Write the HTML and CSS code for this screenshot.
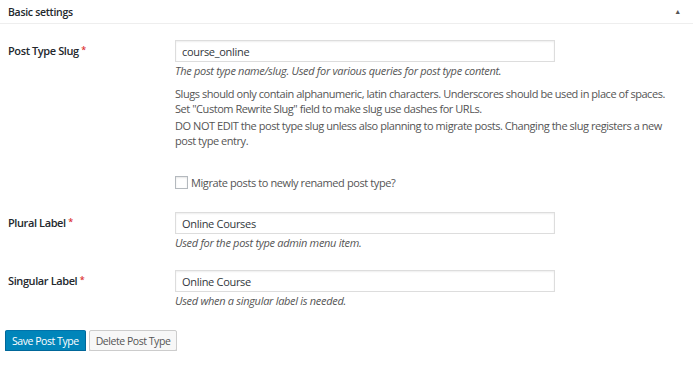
FILE: index.html
```html
<!DOCTYPE html>
<html>
<head>
  <meta charset="utf-8">
  <link rel="stylesheet" href="styles.css">
</head>
<body>
  <div class="postbox">
    <div class="postbox-header">
      <h2>Basic settings</h2>
      <span class="toggle-indicator">&#9650;</span>
    </div>

    <div class="inside">
      <div class="field-row">
        <label class="field-label" for="slug">Post Type Slug <span class="required">*</span></label>
        <div class="field">
          <input type="text" id="slug" class="text-input" value="course_online">
          <p class="description">The post type name/slug. Used for various queries for post type content.</p>
          <div class="notes">
            <p>Slugs should only contain alphanumeric, latin characters. Underscores should be used in place of spaces.<br>Set "Custom Rewrite Slug" field to make slug use dashes for URLs.</p>
            <p>DO NOT EDIT the post type slug unless also planning to migrate posts. Changing the slug registers a new post type entry.</p>
          </div>
          <label class="checkbox-line"><input type="checkbox" class="checkbox"> Migrate posts to newly renamed post type?</label>
        </div>
      </div>

      <div class="field-row">
        <label class="field-label" for="plural">Plural Label <span class="required">*</span></label>
        <div class="field">
          <input type="text" id="plural" class="text-input" value="Online Courses">
          <p class="description">Used for the post type admin menu item.</p>
        </div>
      </div>

      <div class="field-row">
        <label class="field-label" for="singular">Singular Label <span class="required">*</span></label>
        <div class="field">
          <input type="text" id="singular" class="text-input" value="Online Course">
          <p class="description">Used when a singular label is needed.</p>
        </div>
      </div>
    </div>
  </div>

  <div class="actions">
    <button class="button button-primary">Save Post Type</button>
    <button class="button">Delete Post Type</button>
  </div>
</body>
</html>
```

FILE: styles.css
```css
body {
  margin: 0;
  padding: 0;
  font-family: "Open Sans", "Noto Sans", sans-serif;
  font-size: 11px;
  letter-spacing: -0.3px;
  color: #444;
  background: #fff;
}

.postbox-header {
  display: flex;
  align-items: center;
  justify-content: space-between;
  height: 23px;
  padding: 0 12px 0 8px;
  border-bottom: 1px solid #eee;
}

.postbox-header h2 {
  margin: 0;
  font-size: 10.5px;
  font-weight: 600;
  letter-spacing: -0.3px;
  color: #23282d;
}

.toggle-indicator {
  font-size: 7px;
  color: #555;
}

.inside {
  padding: 16px 0 0 8px;
}

.field-row {
  display: grid;
  grid-template-columns: 167px 380px;
  margin-bottom: 20px;
}

.field-label {
  padding-top: 3px;
  font-weight: 600;
  letter-spacing: -0.4px;
  color: #23282d;
}

.required {
  color: #dc3232;
  font-size: 9px;
  vertical-align: top;
}

.text-input {
  box-sizing: border-box;
  width: 380px;
  height: 22px;
  margin: 0;
  padding: 2px 6px;
  border: 1px solid #ddd;
  box-shadow: inset 0 1px 2px rgba(0, 0, 0, 0.07);
  font-family: inherit;
  font-size: 11px;
  letter-spacing: -0.3px;
  color: #32373c;
}

.description {
  margin: 1px 0 0;
  font-style: italic;
  color: #555;
}

.notes {
  width: 510px;
  margin-top: 8px;
  letter-spacing: -0.45px;
  color: #555;
}

.notes p {
  margin: 0 0 2px;
  line-height: 15px;
}

.checkbox-line {
  display: flex;
  align-items: center;
  margin-top: 27px;
  margin-bottom: 2px;
  letter-spacing: -0.4px;
  color: #555;
}

.checkbox {
  box-sizing: border-box;
  width: 13px;
  height: 13px;
  margin: 0 3px 0 0;
  appearance: none;
  border: 1px solid #b4b9be;
  background: #fff;
  box-shadow: inset 0 1px 2px rgba(0, 0, 0, 0.1);
}

.actions {
  display: flex;
  gap: 3px;
  padding: 2px 0 0 5px;
}

.button {
  height: 21px;
  padding: 0 6px;
  border: 1px solid #ccc;
  border-radius: 2px;
  background: #f7f7f7;
  box-shadow: 0 1px 0 #ccc;
  font-family: inherit;
  font-size: 10.5px;
  letter-spacing: -0.45px;
  color: #555;
}

.button-primary {
  background: #0085ba;
  border-color: #0073aa #006799 #006799;
  box-shadow: 0 1px 0 #006799;
  color: #fff;
}
```
